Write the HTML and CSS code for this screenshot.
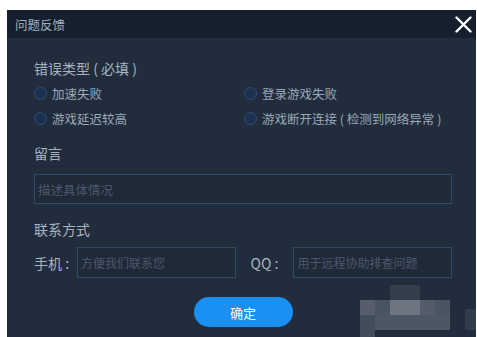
FILE: index.html
```html
<!DOCTYPE html>
<html lang="zh-CN">
	<head>
		<meta charset="UTF-8" />
		<meta name="viewport" content="width=device-width, initial-scale=1.0" />
		<title>问题反馈</title>
		<link rel="stylesheet" href="styles.css">
	</head>

	<body>
		<div class="dialog">
			<header class="dialog-header">
				<span class="dialog-title">问题反馈</span>
				<svg class="close" width="17" height="17" viewBox="0 0 17 17">
					<path d="M1.5 1.5 L15.5 15.5 M15.5 1.5 L1.5 15.5" stroke="#ffffff" stroke-width="2.4" stroke-linecap="round" fill="none" />
				</svg>
			</header>

			<main class="dialog-body">
				<h3 class="section-title">错误类型 ( 必填 )</h3>
				<div class="radios">
					<label class="radio"><span class="dot"></span>加速失败</label>
					<label class="radio"><span class="dot"></span>登录游戏失败</label>
					<label class="radio"><span class="dot"></span>游戏延迟较高</label>
					<label class="radio"><span class="dot"></span>游戏断开连接 ( 检测到网络异常 )</label>
				</div>

				<h3 class="section-title message-title">留言</h3>
				<input class="field message" type="text" placeholder="描述具体情况">

				<h3 class="section-title contact-title">联系方式</h3>
				<div class="contact">
					<span class="contact-label">手机 :</span>
					<input class="field small" type="text" placeholder="方便我们联系您">
					<span class="contact-label qq">QQ :</span>
					<input class="field small" type="text" placeholder="用于远程协助排查问题">
				</div>

				<div class="actions">
					<button class="ok">确定</button>
				</div>
			</main>

			<!-- zone floutée en bas à droite -->
			<div class="mosaic">
				<span class="m1"></span>
				<span class="m2"></span>
				<span class="m3"></span>
				<span class="m4"></span>
				<span class="m5"></span>
				<span class="m6"></span>
				<span class="m7"></span>
				<span class="m8"></span>
				<span class="m9"></span>
			</div>
		</div>
	</body>
</html>
```

FILE: styles.css
```css
body {
	font-family: "Noto Sans CJK SC", "Noto Sans", sans-serif;
	margin: 0;
	padding: 0;
	background-color: #ffffff;
}
.dialog {
	position: relative;
	margin: 10px 1px 0 7px;
	height: 327px;
	background-color: #212c3c;
	overflow: hidden;
}
.dialog-header {
	height: 28px;
	background-color: #151f2e;
	display: flex;
	align-items: center;
	justify-content: space-between;
	padding: 0 4px 0 8px;
}
.dialog-title {
	font-size: 12.5px;
	color: #a4b0bf;
}
.dialog-body {
	padding: 20px 24px 0 27px;
	color: #a7b2c0;
}
.section-title {
	margin: 0;
	font-size: 14px;
	font-weight: normal;
	line-height: 20px;
	color: #a9b4c2;
}
.radios {
	display: grid;
	grid-template-columns: 210px 1fr;
	grid-auto-rows: 25px;
	margin-top: 3px;
}
.radio {
	display: flex;
	align-items: center;
	font-size: 12.5px;
	color: #9ba8b8;
}
.dot {
	flex-shrink: 0;
	box-sizing: border-box;
	width: 13px;
	height: 13px;
	border: 1px solid #2f4e74;
	border-radius: 50%;
	background-color: #1c3150;
	margin-right: 5px;
}
.message-title {
	margin-top: 12px;
}
.field {
	box-sizing: border-box;
	background-color: #1f2a39;
	border: 1px solid #2d4a6c;
	font-family: inherit;
	font-size: 12px;
	color: #a7b2c0;
	padding: 0 3px;
	outline: none;
}
.field::placeholder {
	color: #4b5869;
}
.message {
	display: block;
	margin-top: 11px;
	width: 418px;
	height: 30px;
	font-size: 12.5px;
}
.contact-title {
	margin-top: 15px;
}
.contact {
	display: flex;
	align-items: center;
	margin-top: 8px;
}
.contact-label {
	font-size: 14px;
	width: 43px;
	color: #a9b4c2;
}
.qq {
	margin-left: 15px;
}
.small {
	width: 159px;
	height: 31px;
}
.actions {
	display: flex;
	justify-content: center;
	margin-top: 19px;
}
.ok {
	width: 99px;
	height: 30px;
	border: none;
	border-radius: 15px;
	background-color: #1a90f4;
	color: #ffffff;
	font-family: inherit;
	font-size: 13px;
}
.mosaic span {
	position: absolute;
	display: block;
}
.m1 {
	left: 383px;
	top: 275px;
	width: 30px;
	height: 15px;
	background-color: #333e4b;
}
.m2 {
	left: 353px;
	top: 290px;
	width: 15px;
	height: 15px;
	background-color: #555e6a;
}
.m3 {
	left: 368px;
	top: 290px;
	width: 15px;
	height: 15px;
	background-color: #4a5461;
}
.m4 {
	left: 383px;
	top: 290px;
	width: 30px;
	height: 15px;
	background-color: #6d7580;
}
.m5 {
	left: 413px;
	top: 290px;
	width: 15px;
	height: 15px;
	background-color: #535c68;
}
.m6 {
	left: 428px;
	top: 290px;
	width: 15px;
	height: 15px;
	background-color: #4b5461;
}
.m7 {
	left: 353px;
	top: 305px;
	width: 15px;
	height: 22px;
	background-color: #434c59;
}
.m8 {
	left: 368px;
	top: 305px;
	width: 75px;
	height: 15px;
	background-color: #4d5663;
}
.m9 {
	left: 458px;
	top: 299px;
	width: 12px;
	height: 21px;
	background-color: #323d4b;
}
```
